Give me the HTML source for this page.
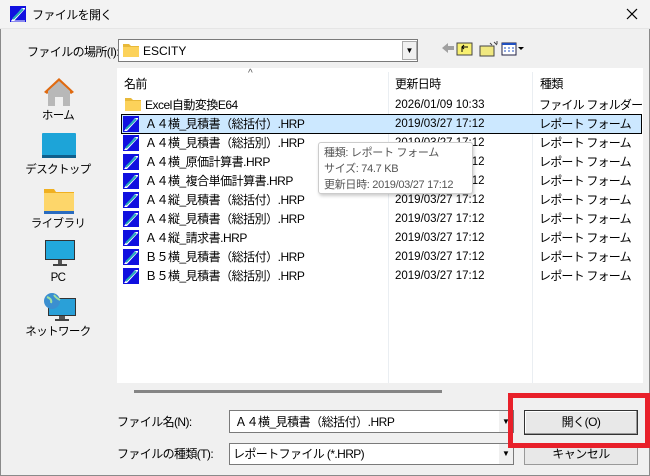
<!DOCTYPE html>
<html><head><meta charset="utf-8"><style>
*{margin:0;padding:0;box-sizing:border-box}
body{width:650px;height:476px;background:#f0f0f0;font-family:"Liberation Sans","Noto Sans CJK JP",sans-serif;font-size:12px;color:#000;position:relative;overflow:hidden;line-height:15px}
.a{position:absolute;white-space:nowrap}
.jp{letter-spacing:-0.6px}
.frame{position:absolute;left:0;top:0;width:650px;height:476px;border:1px solid #8a8a8a;border-top:none}
.row{position:absolute;left:117px;width:525px;height:19px}
.row span{position:absolute;top:3px;line-height:15px;white-space:nowrap}
.hrp{position:absolute;left:6px;top:2px;width:16px;height:16px}
.nm{left:28px;letter-spacing:-0.5px}
.dt{left:278px;font-size:11.5px}
.ty{left:422px;letter-spacing:-0.8px}
.side{position:absolute;width:90px;text-align:center;font-size:11.5px;left:13px;letter-spacing:-0.6px}
</style></head><body>
<div class="frame"></div>
<div class="a" style="left:0;top:0;width:650px;height:29px;background:#f3f3f3;border-bottom:1px solid #e5e5e5"></div>
<svg class="a" style="left:10px;top:6px" width="16" height="16"><rect width="16" height="16" fill="#1010e0"/><path d="M1 15 L12 2 L15 2 L15 3 L4 15Z" fill="#fff"/><path d="M3 13 L13 3" stroke="#2ab" stroke-width="2"/><path d="M1 15 L15 15" stroke="#fff"/></svg>
<div class="a jp" style="left:32px;top:8px">ファイルを開く</div>
<svg class="a" style="left:626px;top:8px" width="12" height="12"><path d="M1 1L11 11M11 1L1 11" stroke="#000" stroke-width="1.2"/></svg>
<div class="a jp" style="left:27px;top:45px">ファイルの場所(I):</div>
<div class="a" style="left:118px;top:39px;width:300px;height:23px;background:#fff;border:1px solid #7a7a7a"></div>
<svg class="a" style="left:123px;top:43px" width="16" height="14"><path d="M0 1h6l2 2h8v11H0z" fill="#e8b93a"/><rect y="4" width="16" height="10" fill="#fcd25a"/></svg>
<div class="a" style="left:143px;top:44px">ESCITY</div>
<div class="a" style="left:402px;top:41px;width:15px;height:19px;background:#f0f0f0;border:1px solid #aaa;font-size:8px;text-align:center;line-height:18px">▼</div>
<svg class="a" style="left:440px;top:40px" width="95" height="18"><path d="M2 8 L8 3 V6 H14 V10 H8 V13Z" fill="#a0a0a0"/><rect x="17" y="3" width="15" height="12" fill="#f8f070" stroke="#444" stroke-width="1"/><path d="M22 12V7h6M24 5l-2 2 2 2" stroke="#000" fill="none"/><rect x="40" y="6" width="14" height="10" fill="#f0e880" stroke="#444"/><path d="M54 2l3 3M57 1v3M50 3l2 2" stroke="#444"/><rect x="62" y="3" width="14" height="12" fill="#fff" stroke="#224"/><rect x="62" y="3" width="14" height="2" fill="#2050c0"/><path d="M64 8h2m2 0h2m2 0h2M64 11h2m2 0h2m2 0h2" stroke="#2050c0"/><path d="M78 7h6l-3 3z" fill="#000"/></svg>
<svg class="a" style="left:42px;top:76px" width="34" height="32"><path d="M17 2 L32 16 L29 18 L17 7 L5 18 L2 16Z" fill="#e06a10"/><path d="M6 15 L17 5 L28 15 V30 H21 V21 H13 V30 H6Z" fill="#b8b8b8"/></svg>
<div class="side" style="top:109px">ホーム</div>
<svg class="a" style="left:42px;top:133px" width="34" height="26"><rect width="34" height="24" rx="1" fill="#1da4d8"/><rect y="22" width="34" height="3" fill="#0f5f8c"/></svg>
<div class="side" style="top:163px">デスクトップ</div>
<svg class="a" style="left:44px;top:188px" width="30" height="26"><path d="M0 1h10l2 3h18v22H0z" fill="#f0b020"/><rect y="5" width="30" height="18" fill="#fdd66a"/><rect y="23" width="30" height="3" fill="#2a6cc0"/></svg>
<div class="side" style="top:217px">ライブラリ</div>
<svg class="a" style="left:45px;top:240px" width="30" height="28"><rect width="30" height="20" fill="#333"/><rect x="1" y="1" width="28" height="18" fill="#22a8dc"/><rect x="13" y="20" width="4" height="4" fill="#555"/><rect x="8" y="24" width="14" height="2" fill="#444"/></svg>
<div class="side" style="top:271px">PC</div>
<svg class="a" style="left:42px;top:292px" width="36" height="30"><rect x="6" y="6" width="28" height="18" fill="#333"/><rect x="7" y="7" width="26" height="16" fill="#2aa0d8"/><rect x="17" y="24" width="6" height="3" fill="#555"/><rect x="13" y="27" width="14" height="2" fill="#444"/><circle cx="10" cy="9" r="8" fill="#3b8fd0"/><path d="M5 5c3 1 5 3 4 6M12 3c2 3 4 4 6 5" stroke="#9fe0a0" stroke-width="2" fill="none"/></svg>
<div class="side" style="top:325px">ネットワーク</div>
<div class="a" style="left:117px;top:68px;width:526px;height:315px;background:#fff"></div>
<div class="a" style="left:388px;top:72px;width:1px;height:311px;background:#eaeef2"></div>
<div class="a" style="left:532px;top:72px;width:1px;height:311px;background:#eaeef2"></div>
<div class="a" style="left:248px;top:66px;font-size:10px;color:#555">^</div>
<div class="a jp" style="left:124px;top:77px">名前</div>
<div class="a jp" style="left:395px;top:77px">更新日時</div>
<div class="a jp" style="left:540px;top:77px">種類</div>
<div class="row" style="top:95px"><svg class="hrp" style="left:8px" width="16" height="14"><path d="M0 1h6l2 2h8v11H0z" fill="#e8b93a"/><rect y="4" width="16" height="10" fill="#fcd25a"/></svg><span class="nm">Excel自動変換E64</span><span class="dt">2026/01/09 10:33</span><span class="ty">ファイル フォルダー</span></div>
<div class="a" style="left:121px;top:114px;width:521px;height:20px;background:#cce8ff;border:1px solid #000"></div>
<div class="row" style="top:114px"><svg class="hrp" width="16" height="16"><rect width="16" height="16" fill="#1010e0"/><path d="M1 15L12 2h3v1L4 15z" fill="#fff"/><path d="M3 13L13 3" stroke="#2ab" stroke-width="2"/></svg><span class="nm">Ａ４横_見積書（総括付）.HRP</span><span class="dt">2019/03/27 17:12</span><span class="ty">レポート フォーム</span></div>
<div class="row" style="top:133px"><svg class="hrp" width="16" height="16"><rect width="16" height="16" fill="#1010e0"/><path d="M1 15L12 2h3v1L4 15z" fill="#fff"/><path d="M3 13L13 3" stroke="#2ab" stroke-width="2"/></svg><span class="nm">Ａ４横_見積書（総括別）.HRP</span><span class="dt">2019/03/27 17:12</span><span class="ty">レポート フォーム</span></div>
<div class="row" style="top:152px"><svg class="hrp" width="16" height="16"><rect width="16" height="16" fill="#1010e0"/><path d="M1 15L12 2h3v1L4 15z" fill="#fff"/><path d="M3 13L13 3" stroke="#2ab" stroke-width="2"/></svg><span class="nm">Ａ４横_原価計算書.HRP</span><span class="dt">2019/03/27 17:12</span><span class="ty">レポート フォーム</span></div>
<div class="row" style="top:171px"><svg class="hrp" width="16" height="16"><rect width="16" height="16" fill="#1010e0"/><path d="M1 15L12 2h3v1L4 15z" fill="#fff"/><path d="M3 13L13 3" stroke="#2ab" stroke-width="2"/></svg><span class="nm">Ａ４横_複合単価計算書.HRP</span><span class="dt">2019/03/27 17:12</span><span class="ty">レポート フォーム</span></div>
<div class="row" style="top:190px"><svg class="hrp" width="16" height="16"><rect width="16" height="16" fill="#1010e0"/><path d="M1 15L12 2h3v1L4 15z" fill="#fff"/><path d="M3 13L13 3" stroke="#2ab" stroke-width="2"/></svg><span class="nm">Ａ４縦_見積書（総括付）.HRP</span><span class="dt">2019/03/27 17:12</span><span class="ty">レポート フォーム</span></div>
<div class="row" style="top:209px"><svg class="hrp" width="16" height="16"><rect width="16" height="16" fill="#1010e0"/><path d="M1 15L12 2h3v1L4 15z" fill="#fff"/><path d="M3 13L13 3" stroke="#2ab" stroke-width="2"/></svg><span class="nm">Ａ４縦_見積書（総括別）.HRP</span><span class="dt">2019/03/27 17:12</span><span class="ty">レポート フォーム</span></div>
<div class="row" style="top:228px"><svg class="hrp" width="16" height="16"><rect width="16" height="16" fill="#1010e0"/><path d="M1 15L12 2h3v1L4 15z" fill="#fff"/><path d="M3 13L13 3" stroke="#2ab" stroke-width="2"/></svg><span class="nm">Ａ４縦_請求書.HRP</span><span class="dt">2019/03/27 17:12</span><span class="ty">レポート フォーム</span></div>
<div class="row" style="top:247px"><svg class="hrp" width="16" height="16"><rect width="16" height="16" fill="#1010e0"/><path d="M1 15L12 2h3v1L4 15z" fill="#fff"/><path d="M3 13L13 3" stroke="#2ab" stroke-width="2"/></svg><span class="nm">Ｂ５横_見積書（総括付）.HRP</span><span class="dt">2019/03/27 17:12</span><span class="ty">レポート フォーム</span></div>
<div class="row" style="top:266px"><svg class="hrp" width="16" height="16"><rect width="16" height="16" fill="#1010e0"/><path d="M1 15L12 2h3v1L4 15z" fill="#fff"/><path d="M3 13L13 3" stroke="#2ab" stroke-width="2"/></svg><span class="nm">Ｂ５横_見積書（総括別）.HRP</span><span class="dt">2019/03/27 17:12</span><span class="ty">レポート フォーム</span></div>
<div class="a" style="left:318px;top:142px;width:155px;height:52px;background:#fff;border:1px solid #ccc;border-radius:3px;box-shadow:1px 2px 3px rgba(0,0,0,.2);color:#555;font-size:11px;line-height:16px;padding:2px 5px;letter-spacing:-0.3px">種類: レポート フォーム<br>サイズ: 74.7 KB<br>更新日時: 2019/03/27 17:12</div>
<div class="a" style="left:134px;top:390px;width:308px;height:3px;background:#858585"></div>
<div class="a jp" style="left:117px;top:415px">ファイル名(N):</div>
<div class="a" style="left:229px;top:410px;width:285px;height:23px;background:#fff;border:1px solid #7a7a7a"></div>
<div class="a" style="left:235px;top:415px;letter-spacing:-0.5px">Ａ４横_見積書（総括付）.HRP</div>
<div class="a" style="left:499px;top:411px;width:14px;height:21px;background:#f0f0f0;font-size:8px;text-align:center;line-height:21px">▼</div>
<div class="a jp" style="left:117px;top:447px">ファイルの種類(T):</div>
<div class="a" style="left:229px;top:443px;width:285px;height:22px;background:#fff;border:1px solid #7a7a7a"></div>
<div class="a jp" style="left:233px;top:447px">レポートファイル (*.HRP)</div>
<div class="a" style="left:499px;top:444px;width:14px;height:20px;background:#f0f0f0;font-size:8px;text-align:center;line-height:20px">▼</div>
<div class="a" style="left:524px;top:410px;width:114px;height:25px;background:#e8e8e8;border:1px solid #333;box-shadow:inset -1px -1px #999,inset 1px 1px #fff;text-align:center;line-height:23px;letter-spacing:-0.5px">開く(O)</div>
<div class="a" style="left:524px;top:443px;width:114px;height:22px;background:#e8e8e8;border:1px solid #999;text-align:center;line-height:20px;letter-spacing:-0.5px">キャンセル</div>
<div class="a" style="left:508px;top:393px;width:142px;height:55px;border:5px solid #e8202a"></div>
</body></html>
